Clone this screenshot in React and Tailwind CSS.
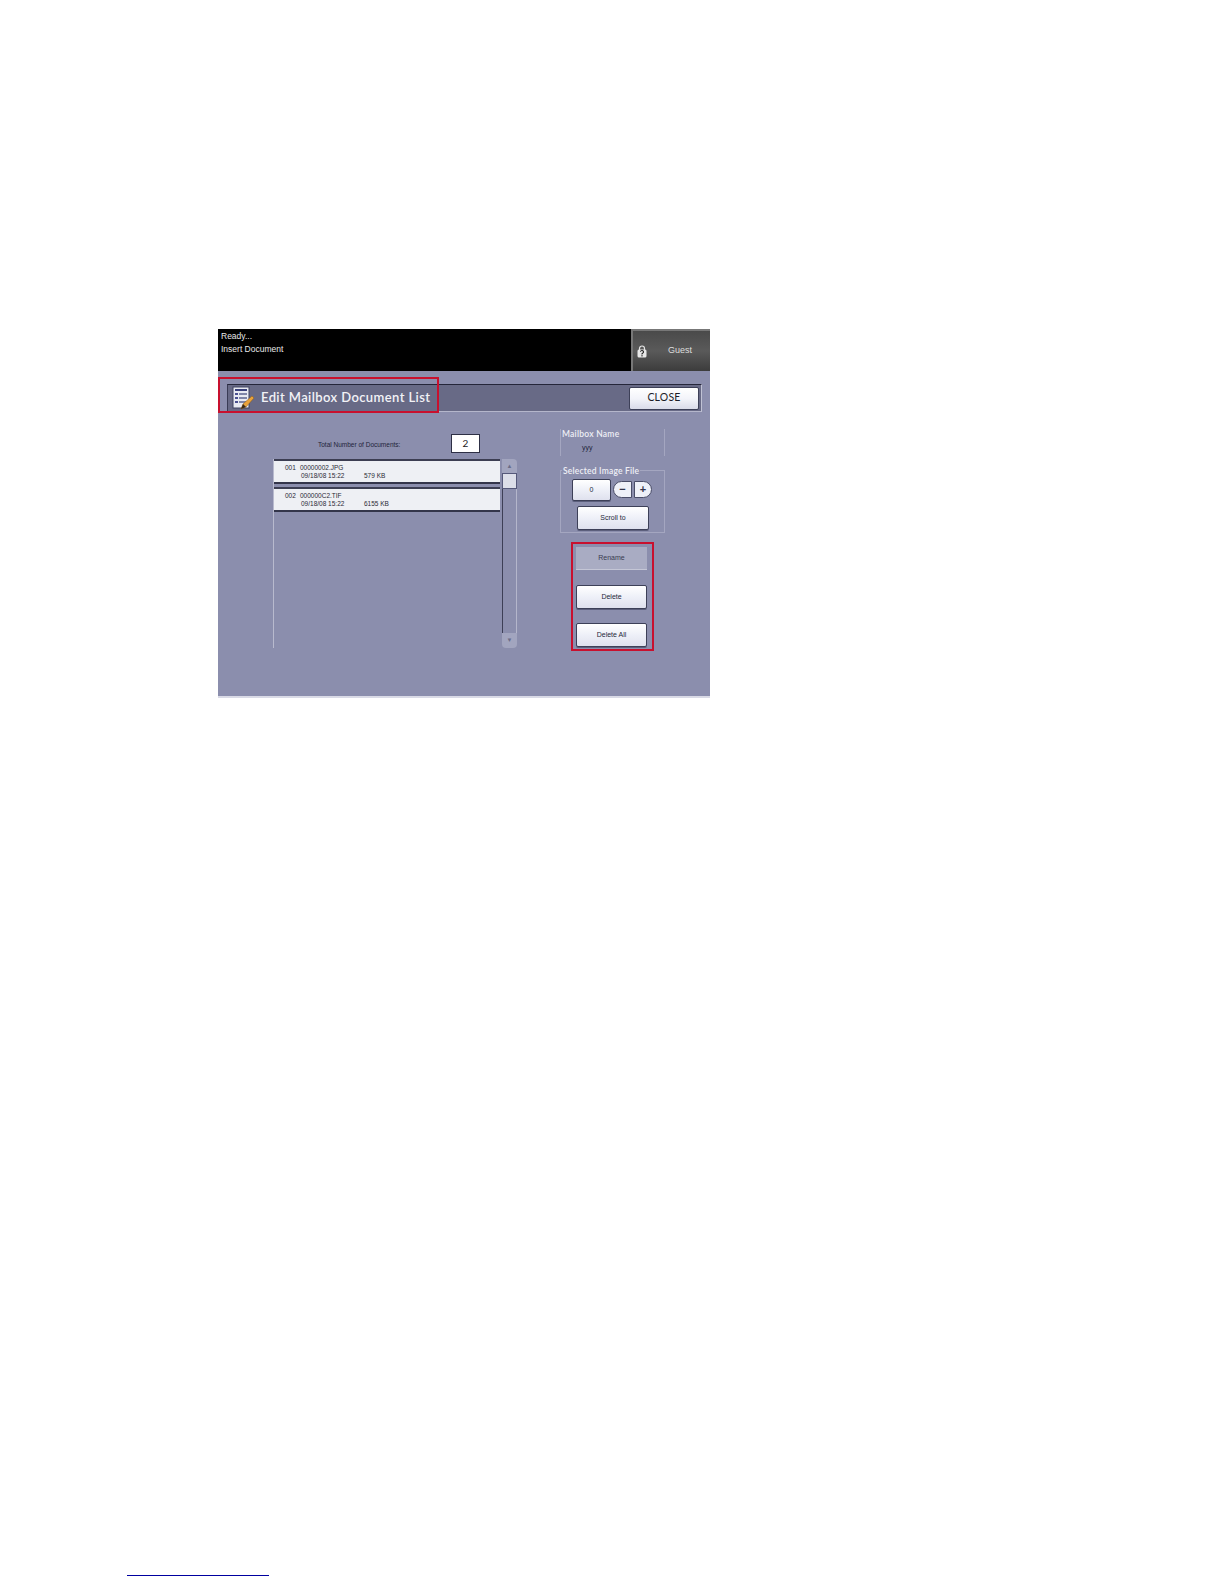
import React from 'react';

const ui = "font-['Liberation_Sans',Arial,sans-serif]";
const label = "font-['Lato',sans-serif]";

function DocIcon() {
  return (
    <svg width="23" height="24" viewBox="0 0 23 24" className="shrink-0">
      <rect x="1" y="1" width="16" height="21" fill="#e8eaf2" stroke="#3f4260" strokeWidth="1" />
      <rect x="3" y="3" width="12" height="2" fill="#39407a" />
      <rect x="3" y="7" width="3" height="2" fill="#4a5090" />
      <rect x="7" y="7" width="8" height="2" fill="#7f86a8" />
      <rect x="3" y="11" width="3" height="2" fill="#4a5090" />
      <rect x="7" y="11" width="8" height="2" fill="#7f86a8" />
      <rect x="3" y="15" width="3" height="2" fill="#4a5090" />
      <rect x="7" y="15" width="8" height="2" fill="#7f86a8" />
      <path d="M9 23 L11 18 L20 10 L22 12 L14 21 Z" fill="#e9a23b" stroke="#8a5a14" strokeWidth="0.5" />
      <path d="M9 23 L11 18 L14 21 Z" fill="#3a2a1a" />
    </svg>
  );
}

function LockIcon() {
  return (
    <svg width="10" height="13" viewBox="0 0 10 13" className="shrink-0">
      <path d="M2.5 5 V3.5 a2.5 2.5 0 0 1 5 0 V5" fill="none" stroke="#e4e4e4" strokeWidth="1.2" />
      <rect x="0.5" y="4.5" width="9" height="8" rx="1.5" fill="#e8e8e8" />
      <path d="M3.5 6.8 a1.5 1.4 0 1 1 2.2 1.3 L5 8.8 V9.6" fill="none" stroke="#222" strokeWidth="1.1" />
      <rect x="4.4" y="10.2" width="1.2" height="1.2" fill="#222" />
    </svg>
  );
}

function PanelButton({ text, className = '' }) {
  return (
    <div
      className={`flex items-center justify-center h-6 border border-[#3d4058] rounded-[2px] bg-gradient-to-b from-[#ffffff] via-[#eef0f8] to-[#dfe1ee] text-[7px] text-[#26283a] shadow-[0_1px_0_#5c5f7c] ${ui} ${className}`}
    >
      {text}
    </div>
  );
}

function DocRow({ num, name, date, size }) {
  return (
    <div className={`flex h-[25px] w-[226px] bg-[#eef0f4] border-t-2 border-b-2 border-t-[#3c3e52] border-b-[#33354a] text-[6.5px] leading-[8px] text-[#2a2a35] ${ui}`}>
      <div className="w-[25px] pl-[11px] pt-[3px]">{num}</div>
      <div className="pl-[1px] pt-[3px]">
        <div>{name}</div>
        <div className="flex pl-[1px]">
          <span className="w-[63px]">{date}</span>
          <span>{size}</span>
        </div>
      </div>
    </div>
  );
}

export default function App() {
  return (
    <div className="relative w-[1224px] h-[1584px] bg-white pt-[329px] pl-[218px]">
      <div className="w-[492px] h-[369px] flex flex-col bg-[#8b8ead] border-b-2 border-b-[#d9dae6]">
        {/* status bar */}
        <div className="flex h-[42px] bg-black shrink-0">
          <div className={`flex-1 pl-[3px] pt-[1px] text-[8.5px] leading-[12.5px] text-[#e8e8e8] ${ui}`}>
            <div>Ready...</div>
            <div>Insert Document</div>
          </div>
          <div className="flex items-center w-[79px] pl-[4px] border-l-2 border-t-2 border-[#777] bg-gradient-to-b from-[#4a4a4a] via-[#5a5a5a] to-[#3c3c3c]">
            <LockIcon />
            <span className={`ml-[21px] text-[9px] text-[#dddddd] ${ui}`}>Guest</span>
          </div>
        </div>

        {/* title bar */}
        <div className="relative mt-[13px] ml-[9px] mr-2 h-[28px] flex items-center justify-between bg-[#686a86] border-t border-t-[#25263a] border-b border-b-[#b4b6cb] border-l border-l-[#3a3c55] border-r border-r-[#c0c2d4] shrink-0">
          <div className="flex items-center pl-[4px]">
            <DocIcon />
            <span className={`ml-[6px] mb-[1px] text-[13px] font-semibold tracking-[0.4px] text-[#f2f2f6] ${label}`}>Edit Mailbox Document List</span>
          </div>
          <div className={`mr-[2px] flex items-center justify-center w-[70px] h-[23px] border border-[#3d4058] rounded-[2px] bg-gradient-to-b from-white via-[#f3f4fa] to-[#d9dbe9] text-[10.5px] tracking-[0.2px] text-[#1c1c28] ${label}`}>
            CLOSE
          </div>
        </div>

        {/* body */}
        <div className="flex flex-1 min-h-0">
          <div className="w-[342px] pl-[55px] shrink-0">
            <div className="flex items-center h-[19px] mt-[22px]">
              <span className={`ml-[45px] w-[133px] pt-[2px] text-[6.5px] text-[#22243a] ${ui}`}>Total Number of Documents:</span>
              <span className={`flex items-center justify-center w-[29px] h-[19px] bg-white border border-[#2d2f45] text-[10px] text-[#222] ${label}`}>2</span>
            </div>
            <div className="flex mt-[6px] h-[189px]">
              <div className="border-l border-l-[#b8bace] h-full">
                <DocRow num="001" name="00000002.JPG" date="09/18/08 15:22" size="579 KB" />
                <div className="h-[3px]" />
                <DocRow num="002" name="000000C2.TIF" date="09/18/08 15:22" size="6155 KB" />
              </div>
              <div className="ml-[2px] w-[15px] flex flex-col h-full">
                <div className="h-[14px] bg-[#a2a5bf] rounded-tr-[4px] flex items-center justify-center text-[6px] text-[#6a6c88]">▲</div>
                <div className="h-[16px] bg-[#dcdee9] border border-[#55587a]" />
                <div className="flex-1 border-l border-l-[#3d3f56] border-r border-r-[#b4b6cb]" />
                <div className="h-[15px] bg-[#a2a5bf] rounded-b-[4px] flex items-center justify-center text-[6px] text-[#6a6c88]">▼</div>
              </div>
            </div>
          </div>

          <div className="w-[105px] shrink-0">
            <div className={`mt-[17px] h-[27px] border-l border-r border-[#a4a6c0] pl-[1px] ${label}`}>
              <div className="text-[8.5px] leading-[10px] font-semibold tracking-[0.25px] text-[#eeeef5]">Mailbox Name</div>
              <div className={`mt-[5px] pl-[20px] text-[7px] leading-[8px] text-[#22243a] ${ui}`}>yyy</div>
            </div>
            <div className="relative mt-[14px] h-[63px] border border-[#a4a6c0]">
              <span className={`absolute left-[1px] top-[-5px] bg-[#8b8ead] pr-[1px] pl-[1px] text-[8.5px] leading-[10px] font-semibold tracking-[0.2px] text-[#eeeef5] ${label}`}>Selected Image File</span>
              <div className="flex items-start pt-[8px] pl-[11px]">
                <PanelButton text="0" className="w-[39px] !h-[22px]" />
                <div className={`flex items-center justify-center ml-[2px] mt-[2px] w-[19px] h-[17px] rounded-l-full rounded-r-[3px] bg-[#eef0f8] border border-[#4a4d68] text-[11px] font-bold leading-none text-[#33354a] ${ui}`}>−</div>
                <div className={`flex items-center justify-center ml-[2px] mt-[2px] w-[18px] h-[17px] rounded-r-full rounded-l-[3px] bg-[#eef0f8] border border-[#4a4d68] text-[11px] font-bold leading-none text-[#33354a] ${ui}`}>+</div>
              </div>
              <div className="pl-[16px] mt-[5px]">
                <PanelButton text="Scroll to" className="w-[72px]" />
              </div>
            </div>
            <div className="mt-[14px] ml-[16px] w-[71px]">
              <div className={`flex items-center justify-center pt-[1px] h-[23px] bg-[#a9acc3] border-b border-[#c4c6d6] text-[7px] text-[#3a3c50] ${ui}`}>Rename</div>
              <PanelButton text="Delete" className="mt-[15px] pt-[1px]" />
              <PanelButton text="Delete All" className="mt-[14px] pt-[1px]" />
            </div>
          </div>
        </div>
      </div>

      {/* callouts over the screen */}
      <div className="absolute left-[218px] top-[377px] w-[221px] h-[36px] border-[2.5px] border-[#c8102e] pointer-events-none" />
      <div className="absolute left-[571px] top-[542px] w-[83px] h-[109px] border-[2.5px] border-[#c8102e] pointer-events-none" />

      {/* footnote rule */}
      <div className="absolute left-[127px] top-[1575px] w-[142px] border-t border-t-[#0000a0]" />
    </div>
  );
}
